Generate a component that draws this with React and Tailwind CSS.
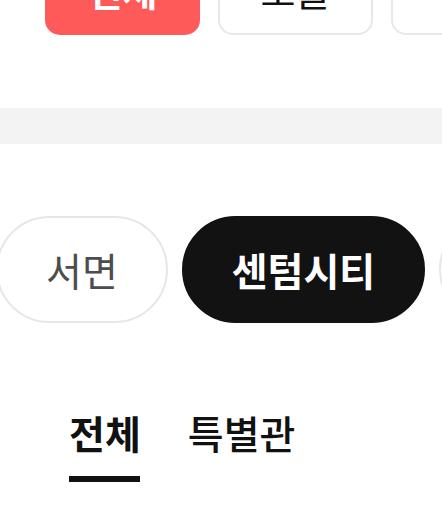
import React from 'react';

const topFilters = ['전체', '오늘', '부산'];
const theaters = [
    { name: '서면', width: 'w-[172px]' },
    { name: '센텀시티', width: 'w-[243px]' },
    { name: '해운대', width: 'w-[200px]' },
];
const tabs = ['전체', '특별관'];

const App = () => {
    return (
        <div className="w-[442px] h-[529px] overflow-hidden bg-white font-['Noto_Sans_CJK_KR','Noto_Sans',sans-serif]">
            {/* Top filter buttons (scrolled, partly off screen) */}
            <div className="flex gap-[18px] pl-[45px] -mt-[55px]">
                {topFilters.map((label, i) => (
                    <button
                        key={label}
                        className={
                            i === 0
                                ? 'w-[155px] h-[90px] shrink-0 rounded-[15px] bg-[#ff5a5a] text-white text-[38px] font-bold leading-none'
                                : 'w-[155px] h-[90px] shrink-0 rounded-[15px] border-2 border-[#e8e8e8] bg-white text-[#111] text-[38px] leading-none'
                        }
                    >
                        {label}
                    </button>
                ))}
            </div>

            {/* Divider band */}
            <div className="mt-[73px] h-[36px] bg-[#f3f3f3]" />

            {/* Theater pills */}
            <div className="mt-[72px] flex gap-[14px] -ml-[4px]">
                {theaters.map((t, i) => (
                    <button
                        key={t.name}
                        className={
                            i === 1
                                ? `${t.width} h-[107px] shrink-0 rounded-full border-2 border-[#121212] bg-[#121212] text-[39px] font-bold leading-none text-white`
                                : `${t.width} h-[107px] shrink-0 rounded-full border-2 border-[#e6e6e6] bg-white text-[39px] leading-none text-[#4d4d4d]`
                        }
                    >
                        {t.name}
                    </button>
                ))}
            </div>

            {/* Tabs */}
            <div className="mt-[90px] flex gap-[47px] pl-[69px]">
                {tabs.map((tab, i) => (
                    <div key={tab} className="flex flex-col">
                        <span className={i === 0 ? 'text-[39px] leading-none font-bold text-[#111]' : 'text-[39px] leading-none font-medium text-[#111]'}>
                            {tab}
                        </span>
                        {i === 0 && <div className="mt-[24px] h-[6px] w-[71px] bg-[#111]" />}
                    </div>
                ))}
            </div>
        </div>
    );
};

export default App;
